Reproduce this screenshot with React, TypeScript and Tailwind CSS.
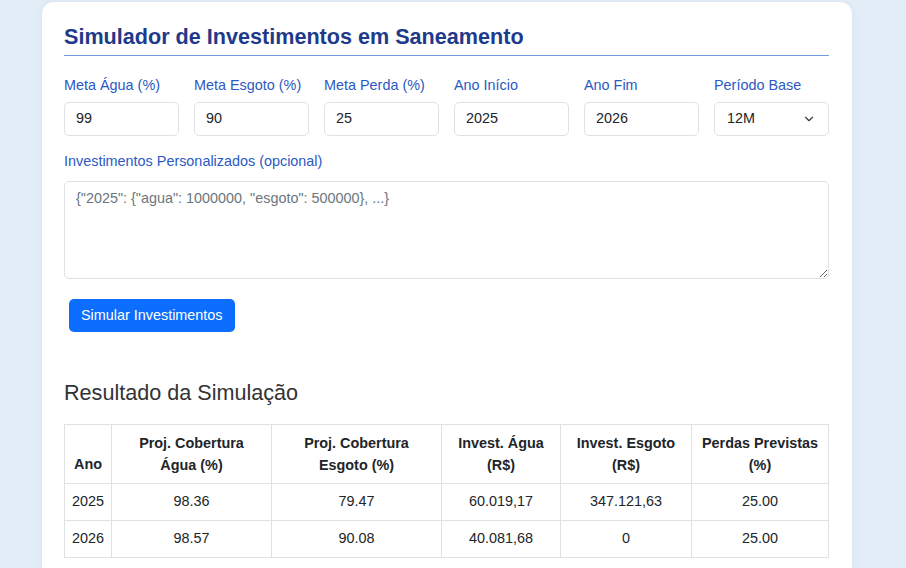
import { ChevronDown } from 'lucide-react'

const fields = [
  { label: 'Meta Água (%)', value: '99' },
  { label: 'Meta Esgoto (%)', value: '90' },
  { label: 'Meta Perda (%)', value: '25' },
  { label: 'Ano Início', value: '2025' },
  { label: 'Ano Fim', value: '2026' },
]

const rows = [
  ['2025', '98.36', '79.47', '60.019,17', '347.121,63', '25.00'],
  ['2026', '98.57', '90.08', '40.081,68', '0', '25.00'],
]

export default function App() {
  return (
    <div className="min-h-[568px] bg-[#e3edf8] pt-[2px] font-['Liberation_Sans',Arial,sans-serif] text-[#212529]">
      <div className="ml-[42px] w-[810px] rounded-t-xl bg-white pl-[22px] pr-[23px] pt-[22px] pb-6 shadow-[0_0_10px_rgba(0,0,0,0.05)]">
        <h2 className="border-b border-[#6d9de0] pb-[5px] text-[21.6px] leading-[26px] font-bold text-[#1e3a8a]">
          Simulador de Investimentos em Saneamento
        </h2>

        <div className="mt-[21px] grid grid-cols-6 gap-x-[15px]">
          {fields.map((f) => (
            <div key={f.label}>
              <label className="block text-[14.4px] leading-[17px] text-[#2b59c3]">{f.label}</label>
              <div className="mt-[8px] flex h-[34px] items-center rounded-[5px] border border-[#dee2e6] px-[11px] text-[14.4px]">
                {f.value}
              </div>
            </div>
          ))}
          <div>
            <label className="block text-[14.4px] leading-[17px] text-[#2b59c3]">Período Base</label>
            <div className="mt-[8px] flex h-[34px] items-center justify-between rounded-[5px] border border-[#dee2e6] px-3 text-[14.4px]">
              <span>12M</span>
              <ChevronDown size={14} strokeWidth={2} className="text-[#343a40]" />
            </div>
          </div>
        </div>

        <label className="mt-[17px] block text-[14.4px] leading-[17px] text-[#2b59c3]">
          Investimentos Personalizados (opcional)
        </label>
        <textarea
          className="mt-[11px] block h-[98px] w-full rounded-[5px] border border-[#dee2e6] px-[11px] py-[6px] text-[14.4px] placeholder:text-[#6c757d]"
          placeholder='{"2025": {"agua": 1000000, "esgoto": 500000}, ...}'
        />

        <button className="mt-[20px] ml-[5px] h-[33px] rounded-[5px] bg-[#0d6efd] px-3 text-[14.4px] text-white">
          Simular Investimentos
        </button>

        <h3 className="mt-[48px] text-[21.6px] leading-[26px] text-[#333]">Resultado da Simulação</h3>

        <table className="mt-[18px] w-full table-fixed border-collapse text-[14.4px]">
          <thead>
            <tr className="h-[59px]">
              <th className="w-[47px] border border-[#dee2e6] px-1 py-[7px] align-bottom font-bold">Ano</th>
              <th className="w-[160px] border border-[#dee2e6] px-2 py-[7px] align-bottom leading-[22px] font-bold">Proj. Cobertura Água (%)</th>
              <th className="w-[170px] border border-[#dee2e6] px-2 py-[7px] align-bottom leading-[22px] font-bold">Proj. Cobertura Esgoto (%)</th>
              <th className="w-[119px] border border-[#dee2e6] px-2 py-[7px] align-bottom leading-[22px] font-bold">Invest. Água (R$)</th>
              <th className="w-[131px] border border-[#dee2e6] px-2 py-[7px] align-bottom leading-[22px] font-bold">Invest. Esgoto (R$)</th>
              <th className="border border-[#dee2e6] px-2 py-[7px] align-bottom leading-[22px] font-bold">Perdas Previstas (%)</th>
            </tr>
          </thead>
          <tbody>
            {rows.map((r) => (
              <tr key={r[0]} className="h-[37px]">
                {r.map((c, i) => (
                  <td key={i} className="border border-[#dee2e6] px-1 text-center">{c}</td>
                ))}
              </tr>
            ))}
          </tbody>
        </table>
      </div>
    </div>
  )
}
